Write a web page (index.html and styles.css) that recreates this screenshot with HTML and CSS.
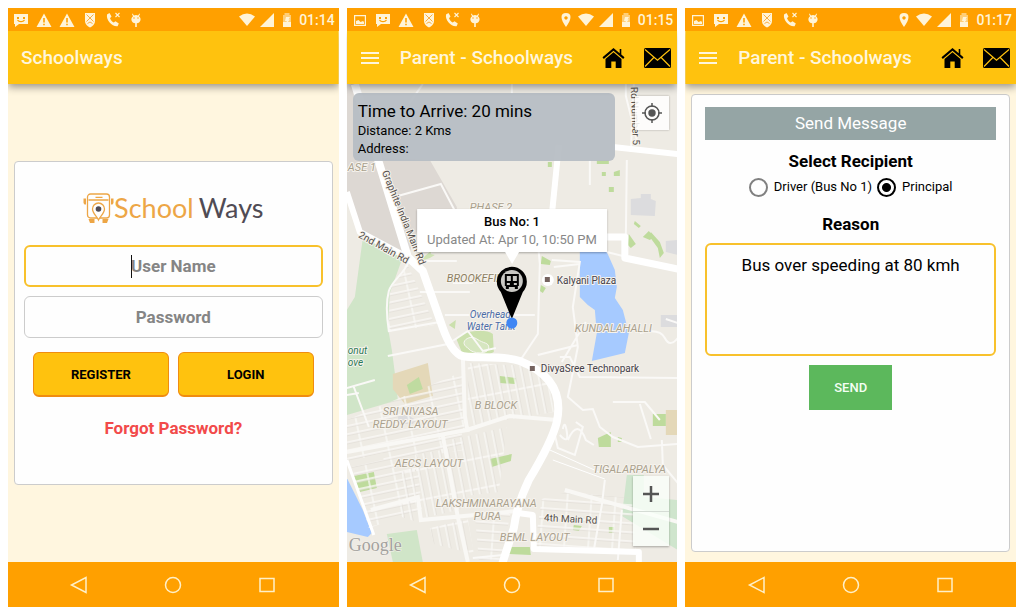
FILE: index.html
```html
<!DOCTYPE html>
<html lang="en">
<head>
<meta charset="utf-8">
<meta name="viewport" content="width=device-width, initial-scale=1">
<title>Schoolways</title>
<link rel="stylesheet" href="styles.css">
</head>
<body>
<svg class="sprite" aria-hidden="true">
  <symbol id="chat" viewBox="0 0 16 16"><path fill-rule="evenodd" d="M1 2h14v10H6l-4 3v-3H1zM4 5v2h2V5zm6 0v2h2V5zM4 8c1.500 3 6.500 3 8 0l-1-.3c-1.500 1.700-4.500 1.700-6 0z"/></symbol>
  <symbol id="warn" viewBox="0 0 16 16"><path fill-rule="evenodd" d="M8 1.500L15.500 15H.5zM7.200 6v4.500h1.600V6zm0 5.700v1.600h1.600v-1.600z"/></symbol>
  <symbol id="shield" viewBox="0 0 16 16"><path d="M3 1h10v8c0 3-2.500 5.500-5 6.500C5.500 14.500 3 12 3 9z"/><path d="M4.500 2.500l7 7M11.500 2.500l-7 7M5.500 11.500L8 10l2.500 1.500" fill="none" stroke="#f79b1c" stroke-width=".8"/></symbol>
  <symbol id="phone" viewBox="0 0 16 16"><path d="M2 2.500L4.500 1l2 3.500L5 6.300c.7 1.800 2 3.200 3.700 4.200l1.800-1.300 3.300 2.200-1.200 2.800C7.500 15 1 8.500 2 2.500z"/><path d="M10.500 1l4 4m0-4l-4 4" stroke="#fff4d8" stroke-width="1.100"/></symbol>
  <symbol id="droid" viewBox="0 0 16 16"><path d="M4.500 1.500l1.500 2q2-1 4 0l1.500-2 .5.500-1 2.300c3 2.500 1.500 6.700-2.200 7V15H7.200v-3.700C3.500 11 2 6.800 5 4.300L4 2z"/><circle cx="6" cy="6" r=".7" fill="#f90"/><circle cx="10" cy="6" r=".7" fill="#f90"/></symbol>
  <symbol id="image" viewBox="0 0 16 16"><path fill-rule="evenodd" d="M2 3h12v11H2zm1.200 1.200v8.600h9.600V4.200z"/><path d="M4 12V9l2.500-1 2 2 2.500-1 1 1v2z"/></symbol>
  <symbol id="place" viewBox="0 0 16 16"><path fill-rule="evenodd" d="M8 1c6 0 6 6 0 14C2 7 2 1 8 1zm0 3.200a1.700 1.700 0 1 0 .01 0z"/></symbol>
  <symbol id="wifi" viewBox="0 0 16 16"><path d="M0 4.500Q8-1.500 16 4.500L8 14z"/></symbol>
  <symbol id="signal" viewBox="0 0 16 16"><path d="M15 1v14H1z"/></symbol>
  <symbol id="battery" viewBox="0 0 16 16"><path d="M5.500 1h5v2H12v12H4V3h1.500z" opacity=".55"/><path d="M4 10h8v5H4zM7 5h4L9.500 7.500H11L7 12l.8-3H6z"/></symbol>
  <symbol id="menu" viewBox="0 0 20 14"><path d="M1 2h18M1 7h18M1 12h18" stroke="#fff6dc" stroke-width="1.900"/></symbol>
  <symbol id="home" viewBox="0 0 22 20"><path d="M11 0L0 9.300l1.300 1.600L11 2.800l9.700 8.100L22 9.300l-3.200-2.700V1h-1.600v4.200z"/><path d="M3 11l8-6.700L19 11v9h-5.800v-6.500H8.800V20H3z"/></symbol>
  <symbol id="mail" viewBox="0 0 27 20"><rect width="27" height="20" rx="1.500"/><path d="M1 1.500l12.500 10.700L26 1.500M1 18.500l8.800-9M26 18.500l-8.800-9" fill="none" stroke="#ffc20e" stroke-width="1.200"/></symbol>
  <symbol id="back" viewBox="0 0 20 20"><path d="M17 2.500v15L2.500 10z" fill="none" stroke="#fff0c8" stroke-width="1.500"/></symbol>
  <symbol id="circle" viewBox="0 0 20 20"><circle cx="10" cy="10" r="7.500" fill="none" stroke="#fff0c8" stroke-width="1.500"/></symbol>
  <symbol id="square" viewBox="0 0 20 20"><path d="M3 3.500h14v13H3z" fill="none" stroke="#fff0c8" stroke-width="1.500"/></symbol>
</svg>

<main class="screens">
  <section class="phone">
    <div class="status">
      <div class="status-left"><svg><use href="#chat"/></svg><svg><use href="#warn"/></svg><svg><use href="#warn"/></svg><svg><use href="#shield"/></svg><svg><use href="#phone"/></svg><svg><use href="#droid"/></svg></div>
      <div class="status-right"><svg><use href="#wifi"/></svg><svg><use href="#signal"/></svg><svg><use href="#battery"/></svg><time>01:14</time></div>
    </div>
    <header class="bar"><h1>Schoolways</h1></header>
    <div class="body body-login">
      <form class="card login">
        <div class="logo">
          <svg class="logo-bus" viewBox="0 0 30 30" aria-hidden="true">
            <g fill="none" stroke="#eda646" stroke-width="1.300"><rect x="4" y="1" width="22" height="24" rx="3"/><path d="M5 7h20M12 4.300h7"/></g>
            <path d="M0 5.500h2.500v6H1L0 10zM30 5.500h-2.500v6H29L30 10zM5 26h6v4H6.500zM19 26h6l-1.500 4H19z" fill="#eda646"/>
            <path d="M15 27c-2-4-6-7-6-11a6 6 0 0 1 12 0c0 4-4 7-6 11z" fill="#fefefe" stroke="#eda646" stroke-width="1.300"/>
            <circle cx="15" cy="16" r="2.800" fill="#504b54"/>
          </svg>
          <span class="logo-school">School</span><span class="logo-ways">Ways</span>
        </div>
        <div class="field">
          <input class="input input-active" type="text" placeholder="User Name" aria-label="User Name">
          <span class="caret"></span>
        </div>
        <div class="field"><input class="input" type="password" placeholder="Password" aria-label="Password"></div>
        <div class="actions"><button class="btn" type="button">REGISTER</button><button class="btn" type="button">LOGIN</button></div>
        <a class="forgot" href="#">Forgot Password?</a>
      </form>
    </div>
    <nav class="nav"><button aria-label="Back"><svg><use href="#back"/></svg></button><button aria-label="Home"><svg><use href="#circle"/></svg></button><button aria-label="Recent"><svg><use href="#square"/></svg></button></nav>
  </section>

  <section class="phone">
    <div class="status">
      <div class="status-left"><svg><use href="#image"/></svg><svg><use href="#chat"/></svg><svg><use href="#warn"/></svg><svg><use href="#shield"/></svg><svg><use href="#phone"/></svg><svg><use href="#droid"/></svg></div>
      <div class="status-right"><svg><use href="#place"/></svg><svg><use href="#wifi"/></svg><svg><use href="#signal"/></svg><svg><use href="#battery"/></svg><time>01:15</time></div>
    </div>
    <header class="bar">
      <button class="icon-btn" aria-label="Menu"><svg class="i-menu"><use href="#menu"/></svg></button>
      <h1>Parent - Schoolways</h1>
      <button class="icon-btn push" aria-label="Home"><svg class="i-home"><use href="#home"/></svg></button>
      <button class="icon-btn" aria-label="Messages"><svg class="i-mail"><use href="#mail"/></svg></button>
    </header>
    <div class="body map">
      <svg class="map-canvas" viewBox="347 84 331 478" preserveAspectRatio="xMidYMid slice" role="img" aria-label="Map of Brookefield">
        <defs>
          <pattern id="g1" width="26" height="8" patternUnits="userSpaceOnUse" patternTransform="rotate(-12)"><path d="M0 1h26M1 0v8" stroke="#fbfaf8" stroke-width="1.300"/><path d="M0 2.300h26" stroke="#dedad3" stroke-width=".6"/></pattern>
          <pattern id="g2" width="8" height="30" patternUnits="userSpaceOnUse" patternTransform="rotate(-11)"><path d="M1 0v30M0 1h8" stroke="#fbfaf8" stroke-width="1.300"/><path d="M2.300 0v30" stroke="#dedad3" stroke-width=".6"/></pattern>
          <pattern id="g3" width="24" height="9" patternUnits="userSpaceOnUse" patternTransform="rotate(4)"><path d="M0 1h24M1 0v9" stroke="#fbfaf8" stroke-width="1.300"/><path d="M0 2.300h24" stroke="#dedad3" stroke-width=".6"/></pattern>
        </defs>
        <rect x="347" y="84" width="331" height="478" fill="#eeebe4"/>
        <path d="M347 84h12l22 74 49 2 27 47v14h-36l-13 36-48-25-13-40z" fill="#ddd8d3"/>
        <path d="M363 238l40 19-13 36-2 34 4 23 3 23 3 27-51 15V310l8-13z" fill="#d0e5c8"/>
        <path d="M393 374l35-11 5 33-28 8-12-15z" fill="#e4d8b8"/>
        <path d="M666 410h12v25h-12z" fill="#e4d8b8"/>
        <path d="M407 385l12-8 4 12-13 5z" fill="#bfdba0"/>
        <path d="M387 534l30-4 6 32h-30z" fill="#d0e5c8"/>
        <path d="M627 475h17v22l34 3v50l-56-34z" fill="#cfe5cd"/>
        <path d="M418 262l13-11v3l4 1-5 3z" fill="#cfe3b5"/>
        <path d="M449 325l7-5-1 9M457 340c0-8 28-13 36-6l1 18-10 5h-20z" fill="#cbe0ad"/>
        <path d="M468 348c-10-6 2-14 9-9s12 3 12 9-16 7-21 0z" fill="#d6e6c0" stroke="#f7f6f1"/>
        <path d="M580 252h27l8 18 2 17-2 11 8 12 6 23-4 20-33 8 5-28-2-23-7-5-8-8z" fill="#a6caff"/>
        <path d="M347 478l16 32 9 23-4 4-21-5z" fill="#a6caff"/>
        <path d="M354 476l20-4 3 16-17 4zM500 376l16 2-1 6-15-1zM490 459l22-5-1 7-19 6zM653 414h13v12h-13zM598 438l13-6v15h-12zM618 437l4 1v4h-4zM509 547h21l1 8-22-1zM609 527h5v6h-5zM574 525l8 1-3 5-6-1zM597 160h12v4h-12zM614 172l6-2v6h-6zM602 172h4v4h-4zM609 187h5v5h-5zM542 256l9 5-1 4-9-1zM541 285l5 3-3 5-3-2zM548 162h4v5h-4zM629 234l7 10-5 4-3-3zM635 221l6 5-2 2-5-4zM643 237l6-6 5 6-4 3zM651 232l9 10 4 11-4 5-2-10-8-11z" fill="#bedb9c"/>
        <path d="M631 199l10-1v-4h10v5l5 2-1 15-24-1zM666 241l12-1v15l-12-3zM661 315h17v12h-17zM398 416l10-1 8 5-3 4h-14z" fill="#dcdcde"/>
        <path d="M390 290l17-27 28 62-46 7z" fill="url(#g1)"/>
        <path d="M347 420l115-48 3 60-118 30zM352 467l65-15 5 58-53 18zM381 440l80-15 3 25-80 12z" fill="url(#g1)"/>
        <path d="M402 472l13-5 2 55-15-5zM415 455l43-8 12 60-50 12zM450 440l57-13-8 65-42 5zM430 528l38-9 6 35-40-10z" fill="url(#g2)"/>
        <path d="M468 363l80 4 6 45-86 14z" fill="url(#g2)"/>
        <path d="M567 492l65 6 4 56-102-3 8-52zM475 515l36-3-10 48h-22z" fill="url(#g3)"/>
        <path d="M553 460l52 19M550 450l49 22" stroke="#fff" fill="none"/>
        <g fill="none" stroke="#faf9f7" stroke-width="2">
          <path d="M357 84q25-12 30 0M423 84l-14 20M512 84v10M626 84v12l12 48M634 84l-3 68M398 196l43-12 22 42 5 21 51 3M409 261c-5 14-16 18-20 30q-4 15 0 40l51-9M415 261h42M453 283h20M420 292h50M445 315h90M388 356l60-12 20-13 15 20 13-3M535 209l5 55-2 70-20 30M552 260l28 2-7 45 5 40-10 50 15 13 10-1 7 18 13 10 25 10 40-3M580 264l-26 3M586 322l-24 40M607 252l20 5M590 160v25M627 160l-1 77M578 345l-40 10M560 357h10l10 20 98 1M660 420l-15-18h-32M640 404l11 35M662 440l1 25 15 18M640 333q20-5 25 5t13 0M678 323l-12-4M554 430l4 18 17 7 8-28-7-5M568 440q10-22 18 0l8 5M563 429q2-10 4 3t-7 3M605 480l-3 25-8 45M622 510l-4 50M347 388l28-8M354 387l15 40M347 395l12-2M473 558l30-3"/>
        </g>
        <g fill="none" stroke="#f9f8f5" stroke-width="4">
          <path d="M463 356l2 60 3 16M347 452l120-22 43-14 47 4M443 436l15 81 10 45M371 510l47-13 3 23 96-9M565 490l113 32"/>
        </g>
        <g fill="none" stroke="#fff" stroke-width="7" stroke-linejoin="round">
          <path d="M355 84l53 173 15 14 20 57q8 22 17 27c8 5 40-1 60 6q46 18 37 61-5 20-28 58-12 25-15 48l-13 40" stroke-width="8"/>
          <path d="M347 192l13 40 47 25" stroke-width="6"/><path d="M559 145l-7 70" stroke-width="6"/><path d="M613 147l65 7" stroke-width="6"/><path d="M607 237h18v21l53 11"/><path d="M518 513l15 2 1 34 105 3v10" stroke-width="6"/><path d="M347 460l17 47 10 28" stroke-width="3"/>
        </g>
        <circle cx="548" cy="280" r="6" fill="#fff"/><path d="M545 277h5v5h-5zM530 366h5v5h-5z" fill="#75635f"/>
        <g class="map-label area">
          <text x="348" y="171">ASE 1</text><text x="470" y="211">PHASE 2</text>
          <text class="dark" x="447" y="282">BROOKEFIELD</text><text x="575" y="332">KUNDALAHALLI</text><text x="383" y="415">SRI NIVASA</text><text x="373" y="428">REDDY LAYOUT</text>
          <text x="475" y="409">B BLOCK</text><text x="395" y="467">AECS LAYOUT</text><text x="436" y="507">LAKSHMINARAYANA</text><text x="474" y="520">PURA</text><text x="500" y="541">BEML LAYOUT</text><text x="593" y="473">TIGALARPALYA</text>
        </g>
        <g class="map-label water"><text x="470" y="318">Overhead</text><text x="467" y="330">Water Tank</text></g>
        <g class="map-label park"><text x="348" y="354">onut</text><text x="348" y="366">ove</text></g>
        <g class="map-label road">
          <text transform="translate(382 172) rotate(68)">Graphite India Main Rd</text><text transform="translate(358 237) rotate(29)">2nd Main Rd</text>
          <text transform="translate(631 87) rotate(88)">Rd Number 5</text><text transform="translate(544 521) rotate(3)">4th Main Rd</text>
        </g>
        <g class="map-label place"><text x="557" y="284">Kalyani Plaza</text><text x="541" y="372">DivyaSree Technopark</text></g>
        <text class="google" x="349" y="551">Google</text>
        <path d="M512 319l-11-27a15 15 0 1 1 22 0z"/><circle cx="512" cy="281" r="11" fill="#c9c8c4"/>
        <path fill-rule="evenodd" d="M505 274h14v12h-1v3h-3v-2h-6v2h-3v-3h-1zm2 2v5h4v-5zm6 0v5h4v-5zm-6 7v2h3v-2zm7 0v2h3v-2z"/>
        <circle cx="512" cy="323" r="5.500" fill="#3f86f4"/>
      </svg>
      <div class="eta"><p class="eta-main">Time to Arrive: 20 mins</p><p>Distance: 2 Kms</p><p>Address:</p></div>
      <button class="locate" aria-label="My location"><svg viewBox="0 0 20 20"><g fill="none" stroke="#555" stroke-width="1.500"><circle cx="10" cy="10" r="7"/><path d="M10 0v4M10 16v4M0 10h4M16 10h4"/></g><circle cx="10" cy="10" r="3.700" fill="#555"/></svg></button>
      <div class="popup"><strong>Bus No: 1</strong><span>Updated At: Apr 10, 10:50 PM</span></div>
      <div class="zoom"><button aria-label="Zoom in"><svg viewBox="0 0 16 16"><path d="M8 0v16M0 8h16" stroke="#555" stroke-width="2.500"/></svg></button><button aria-label="Zoom out"><svg viewBox="0 0 16 16"><path d="M0 8h16" stroke="#555" stroke-width="2.500"/></svg></button></div>
    </div>
    <nav class="nav"><button aria-label="Back"><svg><use href="#back"/></svg></button><button aria-label="Home"><svg><use href="#circle"/></svg></button><button aria-label="Recent"><svg><use href="#square"/></svg></button></nav>
  </section>

  <section class="phone">
    <div class="status">
      <div class="status-left"><svg><use href="#image"/></svg><svg><use href="#chat"/></svg><svg><use href="#warn"/></svg><svg><use href="#shield"/></svg><svg><use href="#phone"/></svg><svg><use href="#droid"/></svg></div>
      <div class="status-right"><svg><use href="#place"/></svg><svg><use href="#wifi"/></svg><svg><use href="#signal"/></svg><svg><use href="#battery"/></svg><time>01:17</time></div>
    </div>
    <header class="bar">
      <button class="icon-btn" aria-label="Menu"><svg class="i-menu"><use href="#menu"/></svg></button>
      <h1>Parent - Schoolways</h1>
      <button class="icon-btn push" aria-label="Home"><svg class="i-home"><use href="#home"/></svg></button>
      <button class="icon-btn" aria-label="Messages"><svg class="i-mail"><use href="#mail"/></svg></button>
    </header>
    <div class="body body-message">
      <form class="card message">
        <h2 class="banner">Send Message</h2>
        <h3>Select Recipient</h3>
        <div class="recipients">
          <label><input type="radio" name="to"><span>Driver (Bus No 1)</span></label>
          <label><input type="radio" name="to" checked><span>Principal</span></label>
        </div>
        <h3 class="reason"><label for="reason">Reason</label></h3>
        <textarea id="reason">Bus over speeding at 80 kmh</textarea>
        <button class="send" type="button">SEND</button>
      </form>
    </div>
    <nav class="nav"><button aria-label="Back"><svg><use href="#back"/></svg></button><button aria-label="Home"><svg><use href="#circle"/></svg></button><button aria-label="Recent"><svg><use href="#square"/></svg></button></nav>
  </section>
</main>
</body>
</html>
```
FILE: styles.css
```css
* { box-sizing: border-box; }
body { margin: 0; background: #fff; color: #000; font-family: Roboto, "Liberation Sans", sans-serif; }
h1, h2, h3, p { margin: 0; }
button { margin: 0; padding: 0; border: 0; background: none; font-family: inherit; cursor: pointer; }
svg { display: block; }
.sprite { position: absolute; width: 0; height: 0; }

.screens { display: grid; grid-template-columns: repeat(3, minmax(0, 1fr)); gap: 8px; min-height: 100vh; padding: 8px; }
.phone { display: flex; flex-direction: column; }

.status { display: flex; justify-content: space-between; align-items: center; height: 23px; padding: 0 4px 0 5px; background: #ffa000; color: #fff4d8; fill: #fff4d8; }
.status-left, .status-right { display: flex; align-items: center; }
.status-left { gap: 7px; }
.status-right { gap: 4px; }
.status svg { width: 16px; height: 16px; }
.status time { font-size: 14px; line-height: 16px; font-weight: 500; }

.bar { position: relative; z-index: 1; display: flex; align-items: center; height: 53px; padding: 0 6px 0 13px; background: #ffc20e; box-shadow: 0 3px 8px rgba(0, 0, 0, .4); clip-path: inset(0 0 -12px 0); }
.bar h1 { color: #fff6dc; font-size: 19px; line-height: 24px; font-weight: 500; white-space: nowrap; }
.icon-btn + h1 { margin-left: 20px; }
.push { margin-left: auto; }
.push + .icon-btn { margin-left: 19px; }
.i-menu { width: 20px; height: 14px; }
.i-home { width: 23px; height: 20px; }
.i-mail { width: 27px; height: 20px; }

.body { flex: 1; display: flex; flex-direction: column; background: #fff6df; }
.body-login { justify-content: center; padding: 10px 6px; }
.body-message { padding: 10px 6px; }
.card { display: flex; flex-direction: column; background: #fefefe; border: 1px solid #ccc; border-radius: 4px; }

.login { padding: 28px 9px 45px; }
.logo { display: flex; align-items: center; justify-content: center; height: 36px; margin-bottom: 19px; font-family: Lato, sans-serif; font-weight: 400; font-size: 27px; line-height: 36px; }
.logo-bus { width: 31px; height: 30px; }
.logo-school { color: #eda646; }
.logo-ways { color: #504b54; margin-left: 5px; }
.field { position: relative; margin-bottom: 9px; }
.input { display: block; width: 100%; height: 42px; border: 1px solid #ccc; border-radius: 6px; background: #fefefe; text-align: center; font: 700 17px/20px Roboto, sans-serif; outline: 0; }
.input::placeholder { color: #858585; opacity: 1; }
.input-active { border: 2px solid #f8c12c; }
.caret { position: absolute; left: calc(50% - 42px); top: 10px; width: 1px; height: 23px; background: #111; }
.actions { display: grid; grid-template-columns: 1fr 1fr; gap: 9px; margin: 5px 9px 0; }
.btn { height: 45px; border: 1px solid #f08c10; border-bottom-width: 2px; border-radius: 6px; background: #ffc20e; color: #000; font-size: 13px; font-weight: 700; }
.forgot { margin-top: 20px; text-align: center; color: #f24a4a; font-size: 17px; line-height: 22px; font-weight: 700; text-decoration: none; }

.map { position: relative; overflow: hidden; }
.map-canvas { position: absolute; inset: 0; width: 100%; height: 100%; }
.map-label { font-size: 11px; stroke: #f6f3ed; stroke-width: 2px; paint-order: stroke; stroke-linejoin: round; }
.area { fill: #aaa18d; font-style: italic; }
.area .dark { fill: #8d7f62; }
.water { fill: #4a6ba8; font-style: italic; font-size: 10px; }
.park { fill: #2c7a55; font-style: italic; font-size: 10px; }
.road { fill: #55504c; font-size: 10px; }
.place { fill: #45414a; font-size: 10px; }
.google { font: 18px "Liberation Serif", serif; fill: #a3a19e; stroke: #f6f3ed; stroke-width: 1px; paint-order: stroke; }
.eta { position: absolute; left: 6px; top: 9px; right: 62px; padding: 7px 5px 3px; border-radius: 6px; background: rgba(183, 189, 195, .94); font-size: 13px; line-height: 18px; }
.eta .eta-main { font-size: 17px; line-height: 22px; }
.locate { position: absolute; top: 12px; right: 8px; display: grid; place-items: center; width: 34px; height: 34px; background: rgba(255, 255, 255, .85); box-shadow: 0 0 2px rgba(0, 0, 0, .3); }
.locate svg { width: 20px; height: 20px; }
.popup { position: absolute; top: 125px; left: 50%; transform: translateX(-50%); display: flex; flex-direction: column; padding: 4px 10px 3px; background: #fff; box-shadow: 0 1px 2px rgba(0, 0, 0, .3); text-align: center; white-space: nowrap; font-size: 13px; line-height: 18px; }
.popup strong { font-weight: 500; }
.popup span { color: #888; }
.popup::after { content: ""; position: absolute; top: 100%; left: 50%; margin-left: -7px; border: 7px solid transparent; border-top: 12px solid #fff; border-bottom: 0; }
.zoom { position: absolute; right: 8px; bottom: 16px; display: flex; flex-direction: column; width: 36px; background: rgba(250, 255, 250, .8); box-shadow: 0 1px 2px rgba(0, 0, 0, .3); }
.zoom button { display: grid; place-items: center; height: 35px; }
.zoom button + button { border-top: 1px solid #d5dcd5; }
.zoom svg { width: 16px; height: 16px; }

.message { flex: 1; align-items: center; padding: 12px 13px; }
.banner { width: 100%; background: #95a5a5; color: #fff; text-align: center; font-size: 17px; line-height: 33px; font-weight: 400; }
.message h3 { margin-top: 10px; font-size: 17px; line-height: 22px; font-weight: 700; }
.recipients { display: flex; gap: 5px; margin-top: 5px; font-size: 13px; line-height: 20px; }
.recipients label { display: flex; align-items: center; gap: 6px; }
.recipients input { appearance: none; width: 19px; height: 19px; margin: 0; border: 2px solid #808080; border-radius: 50%; }
.recipients input:checked { border-color: #000; background: radial-gradient(circle, #000 4px, transparent 5px); }
.message .reason { margin-top: 16px; }
textarea { width: 100%; height: 113px; margin-top: 8px; padding: 9px; border: 2px solid #f8c12c; border-radius: 6px; background: #fefefe; color: #000; text-align: center; font: 17px/22px Roboto, sans-serif; resize: none; outline: 0; }
.send { margin-top: 9px; width: 83px; height: 45px; background: #5cb85c; color: #f4fff4; font-size: 13px; font-weight: 500; }

.nav { display: flex; justify-content: center; align-items: center; gap: 74px; height: 45px; background: #ffa000; }
.nav svg { width: 20px; height: 20px; }
```
